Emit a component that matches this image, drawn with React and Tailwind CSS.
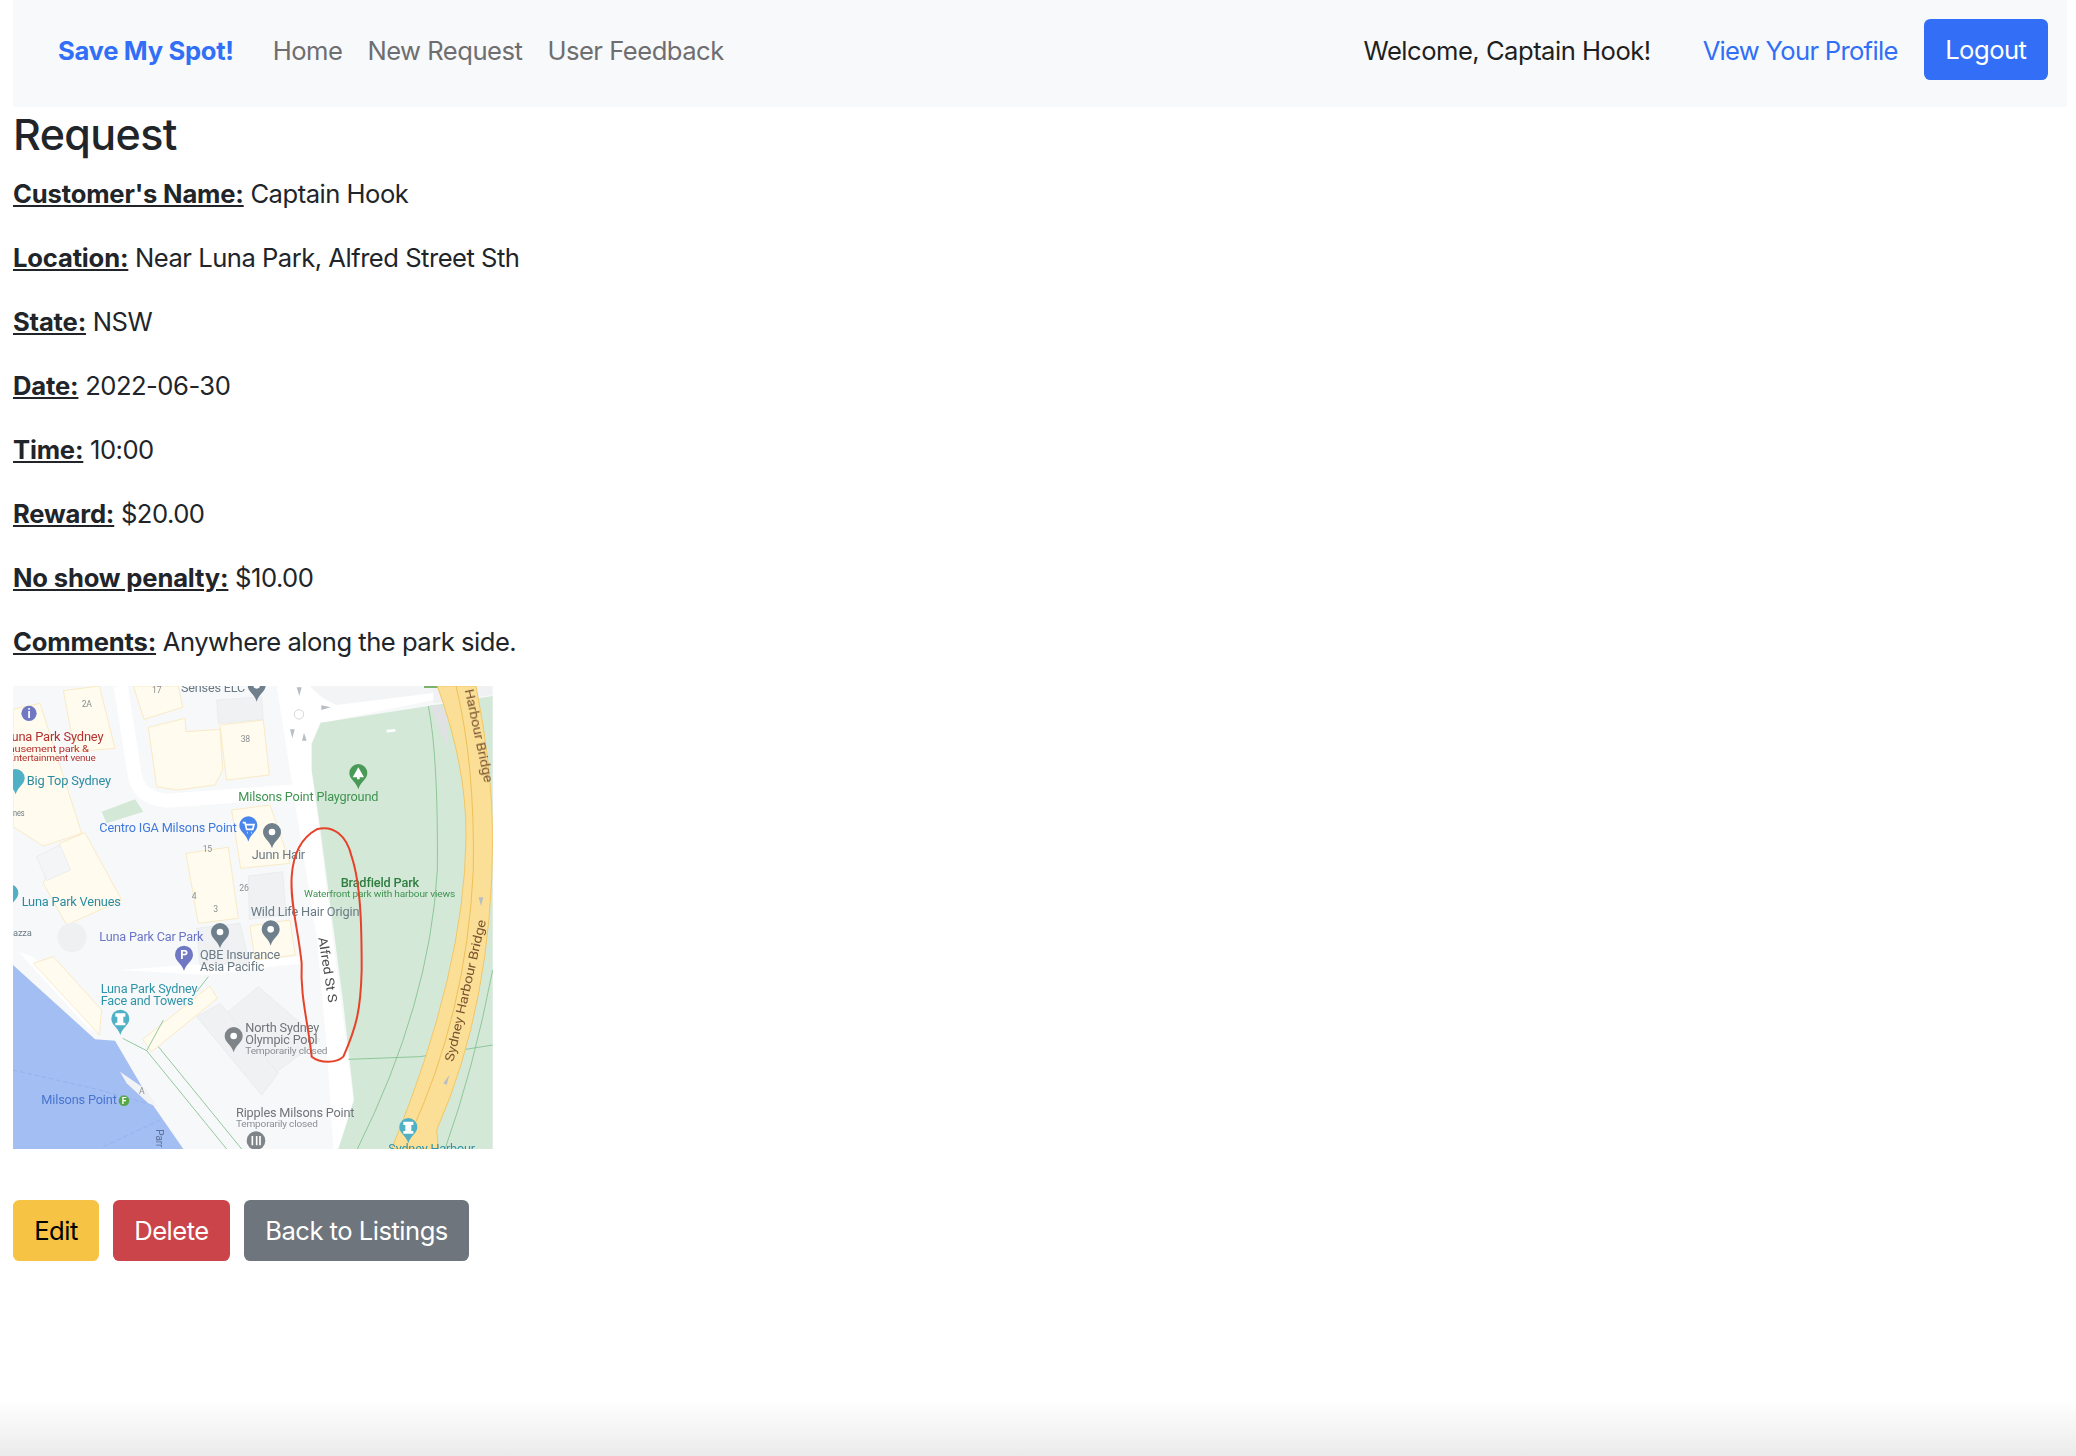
const BLDG = '#fffbee'
const BLDG_LINE = '#f9e7bd'
const GREY_BLDG = '#eff1f3'

function Pin({ x, y, color, dot = true, children }) {
  return (
    <g>
      <path
        d={`M${x},${y} C${x - 6},${y - 22} ${x - 27},${y - 30} ${x - 27},${y - 49} A27,27 0 1 1 ${x + 27},${y - 49} C${x + 27},${y - 30} ${x + 6},${y - 22} ${x},${y} Z`}
        fill={color}
      />
      {dot && <circle cx={x} cy={y - 49} r="10" fill="#fff" />}
      {children}
    </g>
  )
}

function Label({ x, end, y, size = 36, color = '#6b7a85', weight = 400, children }) {
  return (
    <text
      x={x}
      y={y}
      fontSize={size}
      fill={color}
      fontWeight={weight}
      textLength={end - x}
      lengthAdjust="spacingAndGlyphs"
    >
      {children}
    </text>
  )
}

function MapPicture() {
  return (
    <svg viewBox="39 48 1440 1389" className="block w-[480px] h-[463px]" fontFamily="Roboto, sans-serif">
      <defs>
        <filter id="soft" x="0" y="0" width="1" height="1">
          <feGaussianBlur stdDeviation="1.5" />
        </filter>
      </defs>
      <g filter="url(#soft)">
        <rect x="39" y="48" width="1440" height="1389" fill="#f7f8f9" />

        {/* roads */}
        <path d="M362,48 L405,320 Q420,385 500,392 L910,362" fill="none" stroke="#fff" strokeWidth="42" />
        <path d="M830,48 L870,300 L885,400 L950,800 L980,1130 L1000,1437 L1020,1437 L1060,1290 L935,300 L935,220 L960,160 L1300,90 L1320,55 L925,48 Z" fill="#fff" />
        <path d="M930,48 L1315,48 L1305,68 L1010,105 Q960,85 930,48 Z" fill="#f3f4f5" />
        <path d="M360,900 L900,860 L905,880 L620,915 Z" fill="#fff" />

        {/* water */}
        <path d="M39,885 L285,1108 L345,1112 L455,1300 L550,1437 L39,1437 Z" fill="#a3bef2" />
        <path d="M55,845 L100,860 L300,1050 L300,1090 L270,1080 Z" fill="#fff" />
        <path d="M39,1200 L300,1260 L440,1300 M310,1430 L480,1350" fill="none" stroke="#8fabe8" strokeWidth="2" strokeDasharray="14 8" />
        <path d="M360,1205 L440,1260 L470,1310 L445,1300 L380,1240 Z" fill="#f1f3f5" />

        {/* buildings */}
        <g fill={BLDG} stroke={BLDG_LINE} strokeWidth="2.5">
          <path d="M39,118 L120,100 L245,490 L130,528 L39,470 Z" />
          <path d="M180,520 L255,488 L365,690 L200,765 L130,640 Z" />
          <path d="M190,62 L298,48 L345,235 L225,245 Z" />
          <path d="M400,48 L535,48 L548,112 L432,148 Z" />
          <path d="M445,172 L555,145 L558,185 L660,178 L668,300 L645,345 L530,360 L470,350 Z" />
          <path d="M660,165 L790,150 L808,315 L680,330 L672,270 Z" />
          <path d="M558,550 L685,532 L715,745 L595,760 Z" />
          <path d="M695,420 L810,405 L870,580 L722,595 Z" />
          <path d="M750,768 L870,750 L885,855 L765,870 Z" />
          <path d="M100,880 L160,860 L305,1020 L298,1095 Z" />
          <path d="M428,1108 L630,948 L652,985 L455,1145 Z" />
        </g>
        <g fill={GREY_BLDG} stroke="#e6e8ea" strokeWidth="2">
          <path d="M590,775 L720,760 L748,880 L600,885 Z" />
          <path d="M745,618 L848,605 L858,735 L748,748 Z" />
          <path d="M655,1050 L775,950 L960,1110 L830,1205 Z" />
          <path d="M590,1040 L660,1000 L835,1210 L785,1275 Z" />
          <path d="M110,560 L180,525 L212,600 L140,632 Z" fill="#f3f5f6" />
          <path d="M650,90 L785,80 L790,148 L655,160 Z" />
        </g>
        <circle cx="216" cy="802" r="44" fill="#eef0f2" />
        <path d="M305,425 L405,388 L430,425 L320,460 Z" fill="#d3e8d7" />

        {/* park */}
        <path d="M1015,1437 L1062,1290 L1030,1000 L960,470 L935,300 L935,222 L962,158 L1285,108 L1478,78 L1478,1437 Z" fill="#d4e8d8" />
        <path d="M1290,105 L1345,240 L1340,110 Z" fill="#dfe1e3" />
        <path d="M1300,50 L1478,48 L1478,75 L1300,100 Z" fill="#f0f1f3" />
        <rect x="1272" y="48" width="60" height="6" fill="#7cb26c" />
        <rect x="1160" y="178" width="26" height="8" fill="#fff" transform="rotate(-6 1173 182)" />
        <path
          d="M1285,108 Q1315,260 1312,600 Q1290,1000 1072,1437 M1045,1168 L1260,1160 L1478,1125 M1478,900 Q1420,1200 1335,1437"
          fill="none"
          stroke="#80bf8b"
          strokeWidth="2.5"
        />
        <path d="M368,1105 L440,1142 L680,1437 M475,1130 L725,1437 M440,1142 L490,1050 M590,965 L625,920" fill="none" stroke="#80bf8b" strokeWidth="2.5" />

        {/* Sydney Harbour Bridge */}
        <path
          d="M1312,48 Q1400,290 1398,500 Q1395,900 1175,1437 L1315,1437 L1310,1380 Q1478,1000 1478,500 Q1478,300 1428,48 Z"
          fill="#fbdf96"
          stroke="#f0c058"
          strokeWidth="2.5"
        />
        <path d="M1368,48 Q1425,280 1420,600 Q1400,1030 1228,1400" fill="none" stroke="#f0c058" strokeWidth="3" />

        {/* small road arrows and markers */}
        <circle cx="897" cy="133" r="14" fill="none" stroke="#d5d8db" strokeWidth="3" />
        <path d="M890,52 L905,52 L898,78 Z M964,106 L992,112 L964,120 Z M870,178 L884,178 L877,205 Z M906,212 L920,212 L912,188 Z M1436,682 L1450,682 L1443,708 Z M1330,1240 L1348,1215 L1340,1245 Z" fill="#b8bec3" />

        {/* road names */}
        <g fill="#4d4d4d" fontSize="38">
          <text x="955" y="803" transform="rotate(81 955 803)" textLength="198" lengthAdjust="spacingAndGlyphs">Alfred St S</text>
          <text x="1393" y="60" transform="rotate(78 1393 60)" fill="#7a5230" textLength="285" lengthAdjust="spacingAndGlyphs">Harbour Bridge</text>
          <text x="1360" y="1177" transform="rotate(-77 1360 1177)" fill="#7a5230" textLength="435" lengthAdjust="spacingAndGlyphs">Sydney Harbour Bridge</text>
          <text x="468" y="1378" transform="rotate(90 468 1378)" fill="#5a6f96" fontSize="30">Parr</text>
        </g>

        {/* pins */}
        <Pin x={770} y={95} color="#6f7f8c" />
        <Pin x={745} y={515} color="#4a86ec" dot={false}>
          <path d="M728,458 L735,458 L740,478 L758,478 L762,464 L738,464 M742,488 h2 M754,488 h2" fill="none" stroke="#fff" strokeWidth="5" />
        </Pin>
        <Pin x={816} y={535} color="#6f7f8c" />
        <Pin x={812} y={827} color="#6f7f8c" />
        <Pin x={660} y={835} color="#6f7f8c" />
        <Pin x={552} y={903} color="#6f78c4" dot={false}>
          <text x="552" y="868" fontSize="36" fontWeight="700" fill="#fff" textAnchor="middle">P</text>
        </Pin>
        <Pin x={361} y={1095} color="#4fb0c6" dot={false}>
          <path d="M346,1030 h30 v10 h-6 v18 h6 v8 h-30 v-8 h6 v-18 h-6 Z" fill="#fff" />
        </Pin>
        <Pin x={701} y={1147} color="#7f8489" />
        <Pin x={1075} y={358} color="#4a9a56" dot={false}>
          <path d="M1075,292 L1092,322 L1079,322 L1079,328 L1071,328 L1071,322 L1058,322 Z" fill="#fff" />
        </Pin>
        <Pin x={47} y={373} color="#4fb0c6" dot={false} />
        <Pin x={28} y={718} color="#4fb0c6" dot={false} />
        <Pin x={1225} y={1420} color="#4fb0c6" dot={false}>
          <path d="M1210,1355 h30 v10 h-6 v18 h6 v8 h-30 v-8 h6 v-18 h-6 Z" fill="#fff" />
        </Pin>
        <circle cx="87" cy="130" r="23" fill="#6f78c4" />
        <text x="87" y="143" fontSize="36" fontWeight="700" fill="#fff" textAnchor="middle">i</text>
        <circle cx="768" cy="1412" r="28" fill="#7f8489" />
        <path d="M757,1398 v28 M770,1398 v28 M780,1398 v28" stroke="#fff" strokeWidth="5" />
        <circle cx="372" cy="1292" r="16" fill="#55a845" />
        <text x="372" y="1302" fontSize="26" fontWeight="700" fill="#fff" textAnchor="middle">F</text>

        {/* place labels */}
        <Label x={15} end={310} y={214} color="#b3302f">Luna Park Sydney</Label>
        <Label x={-6} end={266} y={246} size={28} color="#b3302f">Amusement park &amp;</Label>
        <Label x={25} end={287} y={274} size={28} color="#b3302f">Entertainment venue</Label>
        <Label x={80} end={333} y={345} color="#2a8ca3">Big Top Sydney</Label>
        <Label x={39} end={73} y={439} size={26}>nes</Label>
        <Label x={298} end={710} y={486} color="#3f79e0">Centro IGA Milsons Point</Label>
        <Label x={755} end={915} y={568}>Junn Hair</Label>
        <Label x={715} end={1135} y={392} color="#3f9350">Milsons Point Playground</Label>
        <Label x={1022} end={1257} y={650} color="#2f7d3f" weight={500}>Bradfield Park</Label>
        <Label x={912} end={1365} y={682} size={28} color="#3f9350">Waterfront park with harbour views</Label>
        <Label x={752} end={1078} y={737}>Wild Life Hair Origin</Label>
        <Label x={65} end={362} y={708} color="#2a8ca3">Luna Park Venues</Label>
        <Label x={39} end={95} y={797} size={26}>azza</Label>
        <Label x={298} end={610} y={814} color="#6a74c8">Luna Park Car Park</Label>
        <Label x={600} end={840} y={867}>QBE Insurance</Label>
        <Label x={600} end={793} y={904}>Asia Pacific</Label>
        <Label x={302} end={592} y={968} color="#2f94a8">Luna Park Sydney</Label>
        <Label x={302} end={580} y={1005} color="#2f94a8">Face and Towers</Label>
        <Label x={736} end={957} y={1085} color="#70757a">North Sydney</Label>
        <Label x={736} end={952} y={1122} color="#70757a">Olympic Pool</Label>
        <Label x={736} end={982} y={1153} size={28} color="#8a8f94">Temporarily closed</Label>
        <Label x={124} end={350} y={1302} color="#4a74d0">Milsons Point</Label>
        <Label x={708} end={1063} y={1342} color="#70757a">Ripples Milsons Point</Label>
        <Label x={708} end={953} y={1372} size={28} color="#8a8f94">Temporarily closed</Label>
        <Label x={1165} end={1425} y={1450} color="#2f94a8">Sydney Harbour</Label>
        <Label x={543} end={735} y={65}>Senses ELC</Label>
        <g fontSize="26" fill="#8b8f93">
          <text x="456" y="70">17</text>
          <text x="245" y="110">2A</text>
          <text x="722" y="217">38</text>
          <text x="608" y="546">15</text>
          <text x="718" y="662">26</text>
          <text x="575" y="688">4</text>
          <text x="640" y="725">3</text>
          <text x="417" y="1272">A</text>
        </g>

        {/* hand drawn outline */}
        <path
          d="M950,478 C1000,465 1040,495 1055,560 C1085,650 1085,800 1085,900 C1082,1020 1070,1070 1030,1160 C1010,1180 960,1180 935,1160 C925,1060 900,980 905,880 C895,780 870,700 875,620 C880,540 910,500 950,478 Z"
          fill="none"
          stroke="#e6432b"
          strokeWidth="6"
        />
      </g>
    </svg>
  )
}

const fields = [
  ["Customer's Name:", 'Captain Hook'],
  ['Location:', 'Near Luna Park, Alfred Street Sth'],
  ['State:', 'NSW'],
  ['Date:', '2022-06-30'],
  ['Time:', '10:00'],
  ['Reward:', '$20.00'],
  ['No show penalty:', '$10.00'],
  ['Comments:', 'Anywhere along the park side.'],
]

export default function App() {
  return (
    <div className="min-h-screen flex flex-col bg-white font-['Inter',sans-serif] text-[25.6px] leading-[38.4px] tracking-[-0.5px] text-[#212529]">
      <div className="flex-1 px-[13px]">
        <nav className="h-[107px] -mr-[4px] bg-[#f8f9fa] flex items-center pl-[45px] pr-[19px] pb-[8px]">
          <a className="pt-[3px] font-bold tracking-[-0.3px] text-[#316ff6] mr-[39px]">Save My Spot!</a>
          <div className="pt-[3px] flex gap-[25px] text-[#6e6e70]">
            <a>Home</a>
            <a>New Request</a>
            <a>User Feedback</a>
          </div>
          <span className="pt-[3px] ml-auto text-[#1f1f1f]">Welcome, Captain Hook!</span>
          <a className="pt-[3px] ml-[52px] tracking-[-0.7px] text-[#316ff6]">View Your Profile</a>
          <button className="ml-[26px] h-[61px] pt-[2px] px-[21.5px] rounded-[6.4px] bg-[#336ff6] text-white">Logout</button>
        </nav>

        <h2 className="text-[43px] leading-[49px] font-medium tracking-[-0.6px] mt-[3px] mb-[15px]">Request</h2>

        {fields.map(([label, value]) => (
          <p key={label} className="pt-[1.3px] mb-[24.3px]">
            <span className="font-bold tracking-[-0.17px] underline">{label}</span> {value}
          </p>
        ))}

        <MapPicture />

        <div className="flex gap-[14px] mt-[51px]">
          <button className="h-[61px] pt-[2px] px-[21.2px] rounded-[6.4px] bg-[#f6c344] text-black">Edit</button>
          <button className="h-[61px] pt-[2px] px-[21.2px] rounded-[6.4px] bg-[#cb444a] text-white">Delete</button>
          <button className="h-[61px] pt-[2px] px-[21.2px] rounded-[6.4px] bg-[#6e757c] text-white">Back to Listings</button>
        </div>
      </div>
      <div className="h-[56px] bg-gradient-to-b from-white to-[#ebebeb]" />
    </div>
  )
}
